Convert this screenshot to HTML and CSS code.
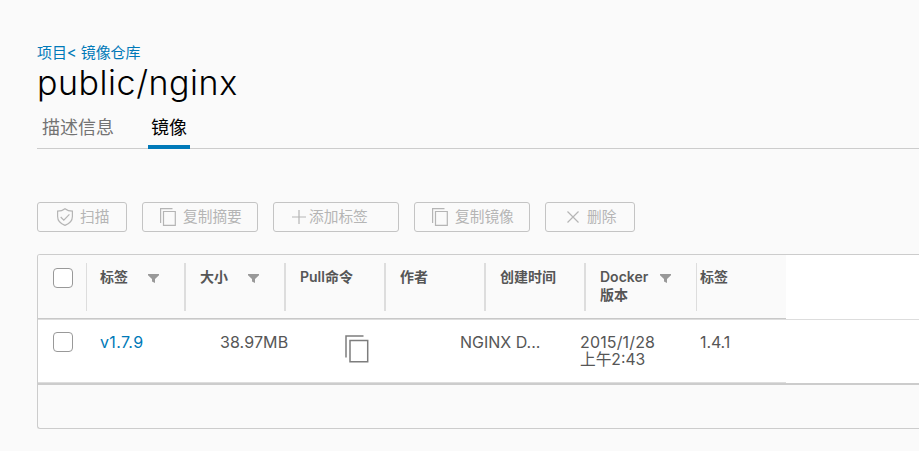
FILE: index.html
```html
<!DOCTYPE html>
<html lang="zh-CN">
<head>
<meta charset="utf-8">
<title>public/nginx</title>
<link rel="stylesheet" href="styles.css">
</head>
<body>
<svg width="0" height="0" class="defs">
  <symbol id="copy" viewBox="0 0 24 28"><path d="M1 22.500V1H18.500M5 5.500H22.700V26.700H5Z"/></symbol>
  <symbol id="filter" viewBox="0 0 11 9"><path d="M0 0H11V1.300L7 5V9L4 7.500V5L0 1.300Z"/></symbol>
</svg>
<main class="page">
  <nav class="crumbs"><a>项目</a>&lt; <a>镜像仓库</a></nav>
  <h1 class="title">public/nginx</h1>
  <div class="tabs">
    <button class="tab">描述信息</button>
    <button class="tab active">镜像</button>
  </div>
  <div class="toolbar">
    <button class="btn scan"><svg class="shield" viewBox="0 0 16 18"><path d="M8 .7C5.800 2.400 3.200 3.100.6 3.200V8.500C.6 12.800 3.500 15.700 8 17.400C12.500 15.700 15.400 12.800 15.400 8.500V3.200C12.800 3.100 10.200 2.400 8 .7ZM3.700 9L6.800 12.100L12.400 6.400"/></svg><span>扫描</span></button>
    <button class="btn copy-digest"><svg class="copy-sm" viewBox="0 0 16 18"><path d="M.6 15V.6H12.500M3.500 3.500H15.300V17.400H3.500Z"/></svg><span>复制摘要</span></button>
    <button class="btn add"><svg class="plus" viewBox="0 0 14 14"><path d="M7 0V14M0 7H14"/></svg><span>添加标签</span></button>
    <button class="btn copy-image"><svg class="copy-sm" viewBox="0 0 16 18"><path d="M.6 15V.6H12.500M3.500 3.500H15.300V17.400H3.500Z"/></svg><span>复制镜像</span></button>
    <button class="btn remove"><svg class="cross" viewBox="0 0 12 12"><path d="M.5 .5L11.500 11.500M11.500 .5L.5 11.500"/></svg><span>删除</span></button>
  </div>
  <section class="grid">
    <div class="band head-band">
      <div class="row head">
        <div class="check"><i class="box"></i></div>
        <div class="th"><span>标签</span><svg class="filter"><use href="#filter"/></svg></div>
        <div class="th"><span>大小</span><svg class="filter"><use href="#filter"/></svg></div>
        <div class="th"><span>Pull命令</span></div>
        <div class="th"><span>作者</span></div>
        <div class="th"><span>创建时间</span></div>
        <div class="th thin"><span>Docker<br>版本</span><svg class="filter"><use href="#filter"/></svg></div>
        <div class="th last"><span>标签</span></div>
      </div>
    </div>
    <div class="band body-band">
      <div class="row data">
        <div class="check"><i class="box"></i></div>
        <div class="td tag"><a>v1.7.9</a></div>
        <div class="td size">38.97MB</div>
        <div class="td pull"><svg class="copy-lg"><use href="#copy"/></svg></div>
        <div class="td author">NGINX D...</div>
        <div class="td"></div>
        <div class="td created"><span class="date">2015/1/28</span><span class="time">上午2:43</span></div>
        <div class="td label">1.4.1</div>
      </div>
    </div>
    <div class="foot"></div>
  </section>
</main>
</body>
</html>
```
FILE: styles.css
```css
* { box-sizing: border-box; }
body {
  margin: 0;
  height: 451px;
  overflow: hidden;
  background: #fafafa;
  color: #565656;
  font-family: Inter, "Noto Sans CJK SC", sans-serif;
}
.defs { position: absolute; }
.page { padding: 43px 0 0 37px; }
.crumbs {
  height: 19px;
  line-height: 19px;
  font-size: 15px;
  letter-spacing: -.1px;
  color: #0079b8;
  white-space: nowrap;
}
.title {
  margin: 0;
  height: 42px;
  line-height: 42px;
  font-size: 34px;
  font-weight: 300;
  letter-spacing: .55px;
  color: #000;
}
.tabs {
  display: flex;
  gap: 31px;
  height: 45px;
  padding-left: 2px;
  border-bottom: 1px solid #ccc;
}
.tab {
  height: 45px;
  margin: 0;
  padding: 3px 3px 0;
  border: 0;
  background: none;
  font: 18px/38px "Noto Sans CJK SC", sans-serif;
  color: #737373;
  display: flex;
}
.tab.active { color: #000; box-shadow: inset 0 -4px #0079b8; }
.toolbar { display: flex; gap: 15px; margin-top: 53px; }
.btn {
  display: flex;
  align-items: center;
  height: 30px;
  padding: 0;
  border: 1px solid #c4c4c4;
  border-radius: 3px;
  background: none;
  color: #b5b5b5;
  font: 14.700px/26px "Noto Sans CJK SC", sans-serif;
}
.btn span { height: 28px; white-space: nowrap; }
.btn svg { fill: none; stroke: #b5b5b5; stroke-width: 1.200; flex: none; }
.scan { width: 90px; padding-left: 19px; }
.copy-digest, .copy-image { width: 116px; padding-left: 17px; }
.add { width: 126px; padding-left: 18px; }
.remove { width: 90px; padding-left: 21px; }
.shield { width: 16px; height: 18px; margin-right: 7px; }
.copy-sm { width: 16px; height: 18px; margin-right: 7px; }
.plus { width: 14px; height: 14px; margin-right: 3px; }
.cross { width: 12px; height: 12px; margin-right: 8px; }
.grid {
  height: 175px;
  margin-top: 22px;
  border: 1px solid #ccc;
  border-right: 0;
  border-radius: 3px 0 0 3px;
  overflow: hidden;
}
.band { background: #fff; }
.head-band { height: 65px; border-bottom: 1px solid #ddd; }
.body-band { height: 65px; border-bottom: 2px solid #ccc; }
.row {
  display: grid;
  grid-template-columns: 48px repeat(5, 100px) 111px 89px;
  width: 748px;
}
.head { height: 64px; background: #fafafa; border-bottom: 1px solid #c8c8c8; padding: 8px 0 7px; }
.data { height: 63px; border-bottom: 1px solid #ddd; }
.check { padding: 12px 0 0 15px; }
.head .check { padding-top: 5px; box-shadow: 1px 0 #ddd; }
.box {
  display: block;
  width: 20px;
  height: 20px;
  border: 1px solid #999;
  border-radius: 4px;
  background: #fff;
}
.th {
  display: flex;
  justify-content: space-between;
  padding: 5px 25px 0 14px;
  border-right: 2px solid #ddd;
  font-size: 14px;
  line-height: 18px;
  font-weight: 600;
  white-space: nowrap;
}
.th.thin { border-right-width: 1px; }
.th.last { border: 0; padding-left: 3px; }
.filter { width: 11px; height: 9px; margin-top: 6px; fill: #999; }
.td {
  padding: 13px 0 0 14px;
  font-size: 16px;
  line-height: 18px;
  white-space: nowrap;
}
.tag { color: #0079b8; letter-spacing: .35px; }
.size { padding-left: 34px; letter-spacing: .1px; }
.pull { padding: 15px 0 0 59px; }
.copy-lg { width: 24px; height: 28px; fill: none; stroke: #7d7d7d; stroke-width: 1.500; }
.author { padding-left: 74px; }
.created { padding-left: 0; margin-left: -6px; }
.created span { display: block; }
.date { letter-spacing: .15px; }
.time { font-size: 15.700px; line-height: 17px; }
.label { padding-left: 3px; letter-spacing: -.1px; }
.foot { height: 43px; }
```
